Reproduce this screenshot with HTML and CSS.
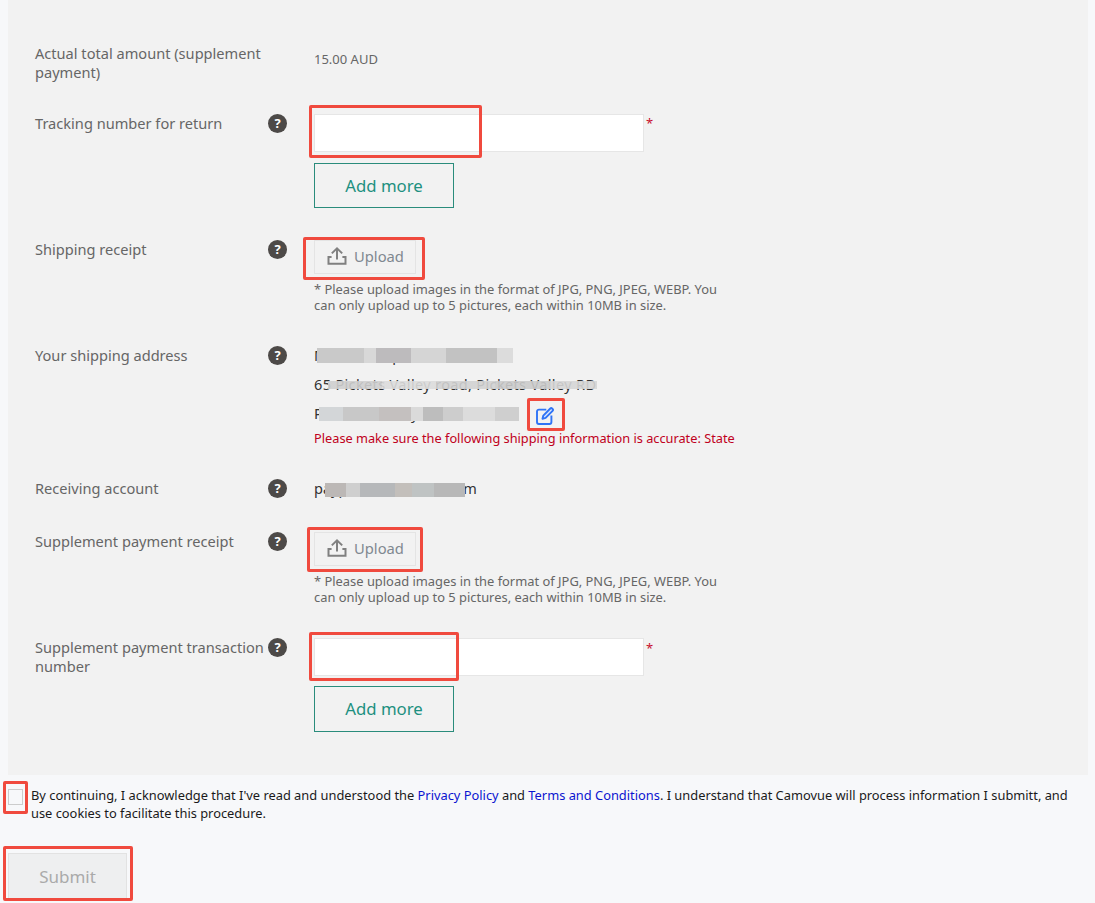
FILE: index.html
```html
<!DOCTYPE html>
<html lang="en">
<head>
<meta charset="utf-8">
<title>Return form</title>
<link rel="stylesheet" href="styles.css">
</head>
<body>
<main class="panel">
  <section class="row row-amount">
    <div class="label">Actual total amount (supplement payment)</div>
    <div class="help-slot"></div>
    <div class="value amount">15.00 AUD</div>
  </section>

  <section class="row row-tracking">
    <div class="label">Tracking number for return</div>
    <div class="help-slot"><span class="help">?</span></div>
    <div class="field">
      <div class="input-line">
        <div class="input"></div><span class="req">*</span>
        <span class="mark mark-track"></span>
      </div>
      <button class="add-more">Add more</button>
    </div>
  </section>

  <section class="row row-receipt">
    <div class="label">Shipping receipt</div>
    <div class="help-slot"><span class="help">?</span></div>
    <div class="field">
      <div class="upload-line">
        <button class="upload">
          <svg class="upload-icon" viewBox="0 0 20 20" width="20" height="20"><path d="M10 13.500V2.500M4.800 7.400 10 2.300l5.200 5.100" fill="none" stroke="#808080" stroke-width="2"/><path d="M4.600 11H1.500v6.800h17V11h-3.100" fill="none" stroke="#808080" stroke-width="2"/></svg>
          Upload
        </button>
        <span class="mark mark-upload-a"></span>
      </div>
      <p class="note">* Please upload images in the format of JPG, PNG, JPEG, WEBP. You can only upload up to 5 pictures, each within 10MB in size.</p>
    </div>
  </section>

  <section class="row row-address">
    <div class="label">Your shipping address</div>
    <div class="help-slot"><span class="help">?</span></div>
    <div class="field">
      <div class="addr">Mxxxxxx xxpxx xxxxxxxx<span class="blur blur-a"></span></div>
      <div class="addr addr-street">65 Pickets Valley road, Pickets Valley RD<span class="blur blur-b"></span></div>
      <div class="addr addr-edit">
        <span class="addr-city">Pxxxxxxx xxxxy, xxx, x, xxxx<span class="blur blur-c"></span></span>
        <span class="edit">
          <svg viewBox="0 0 18 18" width="18" height="18"><path d="M10.300 2.600H2.900A1.900 1.900 0 0 0 1 4.500v10.600A1.900 1.900 0 0 0 2.900 17h10.600a1.900 1.900 0 0 0 1.900-1.900V8.500" fill="none" stroke="#2f73f6" stroke-width="1.900"/><path d="M6.500 11.800 7.300 8.600 14.300 1.500a1.300 1.300 0 0 1 1.800 0l.5.5a1.300 1.300 0 0 1 0 1.800L9.600 10.900Z" fill="#dbe7fd" stroke="#2f73f6" stroke-width="1.900" stroke-linejoin="round"/></svg>
          <span class="mark mark-edit"></span>
        </span>
      </div>
      <div class="warn">Please make sure the following shipping information is accurate: State</div>
    </div>
  </section>

  <section class="row row-account">
    <div class="label">Receiving account</div>
    <div class="help-slot"><span class="help">?</span></div>
    <div class="field"><div class="account">paypalxxxxxxxxxxx.com<span class="blur blur-d"></span></div></div>
  </section>

  <section class="row row-payreceipt">
    <div class="label">Supplement payment receipt</div>
    <div class="help-slot"><span class="help">?</span></div>
    <div class="field">
      <div class="upload-line">
        <button class="upload">
          <svg class="upload-icon" viewBox="0 0 20 20" width="20" height="20"><path d="M10 13.500V2.500M4.800 7.400 10 2.300l5.200 5.100" fill="none" stroke="#808080" stroke-width="2"/><path d="M4.600 11H1.500v6.800h17V11h-3.100" fill="none" stroke="#808080" stroke-width="2"/></svg>
          Upload
        </button>
        <span class="mark mark-upload-b"></span>
      </div>
      <p class="note">* Please upload images in the format of JPG, PNG, JPEG, WEBP. You can only upload up to 5 pictures, each within 10MB in size.</p>
    </div>
  </section>

  <section class="row row-txn">
    <div class="label">Supplement payment transaction number</div>
    <div class="help-slot"><span class="help">?</span></div>
    <div class="field">
      <div class="input-line">
        <div class="input"></div><span class="req req-low">*</span>
        <span class="mark mark-txn"></span>
      </div>
      <button class="add-more add-more-tall">Add more</button>
    </div>
  </section>
</main>

<footer class="foot">
  <div class="consent">
    <span class="check"><span class="mark mark-check"></span></span>
    <p class="consent-text">By continuing, I acknowledge that I've read and understood the <a href="#">Privacy Policy</a> and <a href="#">Terms and Conditions</a>. I understand that Camovue will process information I submitt, and use cookies to facilitate this procedure.</p>
  </div>
  <div class="submit-wrap">
    <button class="submit">Submit</button>
    <span class="mark mark-submit"></span>
  </div>
</footer>
</body>
</html>
```

FILE: styles.css
```css
* { box-sizing: border-box; }
html, body { margin: 0; padding: 0; }
body {
  width: 1095px;
  height: 903px;
  overflow: hidden;
  background: #f7f8fa;
  font-family: "Noto Sans", "Open Sans", sans-serif;
  color: #555;
}
.panel {
  margin-left: 8px;
  width: 1080px;
  height: 775px;
  background: #f2f2f2;
  padding: 44px 0 0 27px;
}
.row {
  display: grid;
  grid-template-columns: 233px 46px 640px;
  align-items: start;
}
.row-amount { height: 70px; }
.row-tracking { height: 126px; }
.row-receipt { height: 106px; }
.row-address { height: 133px; }
.row-account { height: 53px; }
.row-payreceipt { height: 106px; }

.label {
  font-size: 14.6px;
  line-height: 19px;
  color: #666;
}
.help-slot { height: 19px; }
.help {
  display: flex;
  align-items: center;
  justify-content: center;
  width: 19px;
  height: 19px;
  border-radius: 50%;
  background: #4d4a48;
  color: #fff;
  font-size: 13px;
  font-weight: 700;
  line-height: 1;
}
.value { font-size: 13px; }
.amount { line-height: 19px; padding-top: 6px; color: #666; }
.field { display: flex; flex-direction: column; align-items: flex-start; width: 440px; }

.mark {
  position: absolute;
  border: 3px solid #f04a3e;
  border-radius: 2px;
  pointer-events: none;
}
.input-line { position: relative; display: flex; align-items: flex-start; }
.input {
  width: 330px;
  height: 38px;
  background: #fff;
  border: 1px solid #e6e6e6;
}
.req { color: #c8102e; font-size: 13px; line-height: 16px; margin-left: 2px; padding-top: 1px; }
.req-low { padding-top: 2px; }
.mark-track { left: -5px; top: -9px; width: 173px; height: 53px; }
.mark-txn { left: -5px; top: -6px; width: 150px; height: 49px; }

.add-more {
  margin-top: 11px;
  width: 140px;
  height: 45px;
  background: transparent;
  border: 1px solid #2a8c7c;
  color: #1d9080;
  font: 16.8px "Noto Sans", sans-serif;
  padding: 0;
}
.add-more-tall { margin-top: 10px; height: 46px; padding-bottom: 2px; }

.upload-line { position: relative; }
.upload {
  display: flex;
  align-items: center;
  gap: 7px;
  width: 102px;
  height: 34px;
  padding: 0 0 2px 12px;
  background: #f2f2f2;
  border: 1px solid #e4e4e4;
  color: #808890;
  font: 14.75px "Noto Sans", sans-serif;
}
.upload-icon { flex: none; }
.mark-upload-a { left: -11px; top: -3px; width: 122px; height: 43px; }
.mark-upload-b { left: -7px; top: -5px; width: 116px; height: 45px; }
.note {
  margin: 7px 0 0;
  width: 425px;
  font-size: 12.9px;
  line-height: 16px;
  color: #666;
}

.addr {
  position: relative;
  height: 29px;
  font-size: 14.5px;
  line-height: 19px;
  color: #333;
  white-space: nowrap;
}
.addr-street { letter-spacing: 0.35px; }
.addr-edit { display: flex; align-items: flex-start; height: 25px; }
.addr-city { position: relative; display: block; width: 222px; }
.edit { position: relative; display: block; width: 18px; height: 18px; margin-top: 3px; }
.mark-edit { left: -9px; top: -9px; width: 38px; height: 33px; }
.warn { font-size: 12.77px; line-height: 18px; color: #c00020; white-space: nowrap; }

.blur { position: absolute; display: block; }
.blur-a {
  left: 3px; top: 2px; width: 196px; height: 15px;
  background: linear-gradient(90deg, #c9c9c9 0 24%, #d8d8d8 24% 30%, #bdbbbd 30% 48%, #d5d5d5 48% 66%, #c2c2c2 66% 92%, #dcdcdc 92%);
}
.blur-b {
  left: 14px; top: 6px; width: 269px; height: 8px;
  opacity: 0.9;
  background: linear-gradient(90deg, #cfcfcf 0 20%, #dcdcdc 20% 40%, #d2d2d2 40% 62%, #cbcbcb 62% 82%, #d6d6d6 82%);
}
.blur-c {
  left: 5px; top: 3px; width: 200px; height: 14px;
  background: linear-gradient(90deg, #d3d6d8 0 12%, #c8c8c8 12% 30%, #c4c0bf 30% 46%, #dadada 46% 52%, #bdbdbd 52% 62%, #cdcdcd 62% 72%, #dcdcdc 72% 88%, #cfcfcf 88%);
}
.account { position: relative; font-size: 14.5px; line-height: 19px; color: #333; white-space: nowrap; }
.blur-d {
  left: 11px; top: 4px; width: 140px; height: 14px;
  background: linear-gradient(90deg, #bcb8b6 0 15%, #cfcfcf 15% 25%, #b6b8ba 25% 50%, #c3bfbb 50% 62%, #bfc3c3 62% 78%, #b8b8b8 78%);
}

.foot { padding: 12px 0 0 8px; }
.consent { display: flex; align-items: flex-start; }
.check {
  position: relative;
  flex: none;
  width: 15px;
  height: 16px;
  margin-top: 2px;
  border: 1px solid #ccc;
  background: #f7f8fa;
}
.mark-check { left: -6px; top: -9px; width: 25px; height: 33px; }
.consent-text {
  margin: -1px 0 0 8px;
  width: 1045px;
  font-size: 12.85px;
  line-height: 18px;
  color: #1a1a1a;
}
.consent-text a { color: #0a14d0; text-decoration: none; }
.submit-wrap { position: relative; width: 119px; margin-top: 31px; }
.submit {
  display: block;
  width: 119px;
  height: 46px;
  background: #eeeff0;
  border: 1px solid #e2e2e2;
  color: #aaa;
  font: 17px "Noto Sans", sans-serif;
  padding: 0;
}
.mark-submit { left: -5px; top: -7px; width: 130px; height: 55px; }
```
